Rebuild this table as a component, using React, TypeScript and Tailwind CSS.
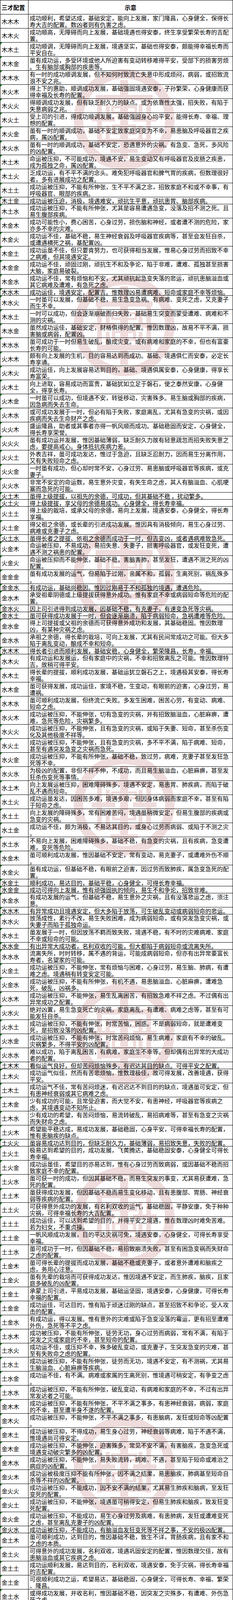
import React from "react";

// 三才配置表：每行的换行位置按原图写死
const rows: [string, string][] = [
  ["木木木", "成功顺利，希望达成，基础安定，能向上发展，家门隆昌，心身健全，保得长|寿大吉的配置。数凶者则有仇害之虑。"],
  ["木木火", "成功顺高，无障碍而向上发展，基础境遇也得安泰，终生享受繁荣长寿的吉配|置。"],
  ["木木土", "成功顺调，无障碍而向上发展，境遇坚实，基础也得安泰，颇能得幸福长寿而|平安自在。"],
  ["木木金", "虽有成功运，多受环境或他人所迫害有变动转移难得平安，受部下的损害劳烦|。生有脑部或胸部的疾患等。"],
  ["木木水", "有一时的成功顺调发展，但不知何时致流亡失意中形成烦闷，病弱，或招致流|浪不安之兆。"],
  ["木火木", "得上下的惠助，顺调成功发展，基础强固境遇安泰，子孙繁荣，心身健康而获|得幸福及长寿的配置。"],
  ["木火火", "得顺调成功发展，但有缺乏耐久力的缺点。或为依靠性太强，招失败，有陷于|失意病弱之兆。"],
  ["木火土", "受上司的引进，得成功顺调发展，基础强固身心均平安，能得长寿、幸福、理|想的配置。"],
  ["木火金", "虽有一时的顺调成功，基础不安定致家庭突变为不幸，易患脑及呼吸器官之疾|病，属凶配置。"],
  ["木火水", "虽有一时的顺调成功，基础不安定，恐遇意外的灾祸。有急变、急死，多风险|的凶配置。"],
  ["木土木", "命运被压抑，不可能成功，境遇不安，易生变动又有呼吸器官及皮肠之疾患，|成为孤独之命，属凶配置。"],
  ["木土火", "乏成功运，有不平不满的念头。难免犯呼吸器官和脾气胃的疾病，但数理很好|者，多有进展成功之配置。"],
  ["木土土", "成功运被压抑，不能有所伸张，生不平不满之念，招致家庭不和或不幸事，有|呼吸器官、眼部的疾病。"],
  ["木土金", "成功运被压迫，消极，境遇难安，顽抗生平意，顽抗患胃、脑部疾病。"],
  ["木土水", "成功运被压抑，不能有所伸张，尤其是容易遭遇急变，没落及招不测之死。且|易生腹部疾病。"],
  ["木金木", "成功可能性小，费心困苦，心身过劳，损伤脑和神经，或者遭不测的危险，家|亦多不幸的灾难。"],
  ["木金火", "成功运不佳，基础不稳，易生神经衰弱及呼吸器官疾病等，甚至会发狂自杀，|或遭遇横死之祸，基配置凶。"],
  ["木金土", "成功运虽不佳，但只要肯努力，也可获得相当发展，惟易心身过劳而招致不幸|之病难，但其境遇安定。"],
  ["木金金", "成功运不佳，顽固过刚，顽抗生不和及争论，陷于非难，遭难、孤独甚至损害|大脑，家庭易破裂。"],
  ["木金水", "成功运不佳，常有烦恼和不安，尤其顽抗起急变失落的悲运，顽抗患脑溢血或|其它病难及遭难，有急死之虑。"],
  ["木水木", "成功运佳，境遇安定，配置吉。惟数理凶易遭病难、短命或家庭不幸等烦恼。"],
  ["木水火", "一时虽可以发展，但基础不稳，易生急变急祸。有病难、变死之虑，又克妻子|而生不幸。"],
  ["木水土", "一时可以成功，但会逐渐崩破而归失败，基础易生突变而蒙受遭难、病难和不|测的灾祸。"],
  ["木水金", "虽然成功运佳，基础安定，财格俱得的配置。惟因数理凶，故易不平不满，损|害脑或病弱，配置凶。"],
  ["木水水", "虽可成功于一时但易生破乱，酿成灾变。或有病难和家庭的不幸，但也有富豪|长寿的可能。"],
  ["火木木", "颇有向上发展的生机，目的容易达到而成功。基础、境遇俱仁而安泰，必定长|寿享通。"],
  ["火木火", "成功运佳，向上发展容易达到目的，基础、境遇俱属安泰，心身健康，得享长|寿富荣。"],
  ["火木土", "向上进取，容易成功而富贵，基础犹如立足于磐石，使之泰然安康，心身健|全，得享长寿。"],
  ["火木金", "一时虽可以成功，但境遇不安，转徙移动，灾害殊多。易生脑或胸部的疾病，|因急病而失去生命。"],
  ["火木水", "或可成功发展于一时，但必有陷于失败，家庭离乱，尤其有急变的灾祸，或因|疾病而失去生命财产之虑。"],
  ["火火木", "盛运隆昌，助者或其事者亦得一帆风顺而成功。基础稳固而安定，心身健全，|得长寿享荣誉。"],
  ["火火火", "虽有成功运并发展，惟因基础薄弱，缺乏耐久力故有轻意疏忽而招失败失意之|虑，要提高戒心。身体抵抗疾病力差。"],
  ["火火土", "外表吉祥，虽可成功发达，惟过于急迫，且缺乏忍耐力，因而易生分离作用，|又有失败短命之虑。"],
  ["火火金", "一时虽有成功，但心却时常不安，心身过劳、易患脑或呼吸器官等疾病，或克|妻子。"],
  ["火火水", "非常不安定的命运数，易生意外灾变，有失生命之虑，其人有脑溢血、心肌哽|塞而急死的可能。"],
  ["火土木", "虽得上级提拔，以祖先的余德，可成功，但其基础不稳 ，扰动繁多。"],
  ["火土火", "得上级提拔，享父母的余德易成功。心身健全，得长寿幸福。"],
  ["火土土", "得上级的栽培，或承父母的余德，易向上发展，境遇安泰，心身健全，得长寿|享福。"],
  ["火土金", "得父祖之余德，或长辈的引进成功发展。惟因具有消极倾向，易生心身过劳、|病难或克妻子之虑。"],
  ["火土水", "虽得长者之提拔、依祖之余德而成功于一时，但吉变凶，或者遇病难致急死。"],
  ["火金木", "命运被压抑，不易成功，易招失意、失妻子，损害呼吸器官，或发狂变死，遭|遇不测之祸患的配置。"],
  ["火金火", "命运被压抑而不能伸张，基础不稳，害脑害肺，甚至发狂，遭遇不测之死的凶|配置。"],
  ["金金金", "虽有成功发展的运气，但易陷于过刚，亲属不和，孤弱，生离死别，祸乱殊多|。"],
  ["金金水", "有成功运，基础尚稳因。惟因过刚易于不和孤独的境遇，遭遇危险。"],
  ["金水木", "承受祖辈阴德或上级提拔获得意外成功。惟有家庭不幸或病弱短命等危险的配|置。"],
  ["金水火", "因上司引进得到成功发展，因基础不稳，有克妻子，有速变急死等灾祸。"],
  ["金水土", "虽可获得成功发展于一时，但会逐渐崩溃，陷于病弱短命，急祸遭难等危险。"],
  ["金水金", "得上司提拔或父祖的余德而可获得意外成功和发展，其基础稳固。惟因数理|凶，有某种灾祸之虑。"],
  ["金水水", "承祖之余德，得长辈的栽培，可向上发展，尤其有民间常成功之可能。但大多|陷于离乱变动，酿成不幸和短命。"],
  ["水木木", "得长者引进而顺利发展，基础安稳，心身健全，繁荣隆昌，长寿，幸福。"],
  ["水木火", "有成功运和发展运，但有家庭中的灾祸，不幸和招致离乱之可能。惟因数理特|吉，故稍可得平安。"],
  ["水木土", "得长辈的提拔，顺利成功发展，基础运犹立磐石之上，境遇极其安泰，得长寿|幸福。"],
  ["水木金", "虽可获得发展，成功运佳，家境不稳，生变动，有眼前的迫害，心身过劳，易|遭祸。"],
  ["水木水", "虽可顺利成功发展，但终流亡失败。多发生困难，困苦心劳，有变动、病难、|短命之虑。"],
  ["水火木", "成功运被压抑，不能伸张，切有急变的灾祸，并有招致脑溢血，心脏麻痹，遭|难，急死等危险，灾祸繁多。"],
  ["水火火", "成功运被压抑，不能伸张，且有急变的灾祸，或陷于失妻、短命，甚至杀伤变|化及其他极度不祥等。"],
  ["水火土", "成功运被压抑，不能伸张，且有急变的灾祸，多不平不满，陷于病难、短命，|甚至有遇突发急变之灾祸而急死。"],
  ["水火金", "成功运被压抑，不能有所伸张，基础不稳，致过劳，病难，克妻子甚至发狂急|死等不幸。"],
  ["水火水", "为极凶的配置，非但不祥不伸，不成功，而且易生脑溢血，心脏麻痹，甚至发|狂杀伤变死等事情。"],
  ["水土木", "向上发展运被压抑，困难障碍殊多，境遇不安定，易患胃、肺疾病，而陷于破|乱不遇而短命。"],
  ["水土火", "成功运虽发达，因困苦多难，境遇多艰，但因身体病弱而家庭不幸，甚至有陷|于短命之虑。"],
  ["水土土", "向上发展的障碍殊多，常有困难苦闷，境遇虽稍微安定，但易生腹部的疾病或|急变的灾祸。"],
  ["水土金", "成功运不佳，颇为消极，不易达其目的，或身心过劳而病弱、或陷于不测之灾|。"],
  ["水土水", "不易向上发展，困难障碍殊多，基础不稳，有急变的灾祸，且有疾病，急变遭|难，变死等危险。"],
  ["水金木", "虽可顺利成功发展，惟因基础不安定，常有变动，易克妻子，或遭难外伤不顺|。"],
  ["水金火", "虽有成功运，但基础不稳，有眼前之迫害，因过劳而致肺疾，属急变急死的配|置。"],
  ["水金土", "顺利成功，易达目的，基础平稳，心身健全，可得长寿幸福。"],
  ["水金金", "成功可得向上发展，惟有顽强固执的倾向，易生不和争论，招致非难。"],
  ["水金水", "有成功发展的运气，但基础不稳，易生意外之灾祸，且有没落悲运之虑，须注|意。"],
  ["水水木", "有异常成功且境遇安定，但大多陷于放荡，可生破乱变动或病弱短命的悲运。"],
  ["水水火", "放荡成性，素行不改，易生失败困难，成为病弱短命，或有突发急变灾祸，或|失妻子而陷于孤独命运。"],
  ["水水土", "虽发展于一时，但因放荡不羁而致失败，境遇不稳，有不时的灾难病难、家庭|不幸或短命的可能。"],
  ["水水金", "有出异常大成功者，名利双收的可能，但大都陷于病弱短命或流离失所。"],
  ["水水水", "流离失所，时时转移，属不遇的背运，可能成病弱短命，但亦有出异常豪富长|寿者，名望家的可能。"],
  ["火金土", "成功运被压抑，不能伸张，常有烦恼与困难，心身过劳，易生脑、肺病，有遭|难之虑。境遇稍有转变安定可能。"],
  ["火金水", "成功运被压抑，不能有所伸张，有机不遇，易患脑溢血、心脏麻痹，遭难急|死，破乱，凶祸多。"],
  ["火水木", "成功运被压抑，不能伸张，易生乱离困苦，有招致急难不祥之虑。不过偶有出|异常成功之配置。"],
  ["火水火", "绝对凶置，易生急变死亡的灾祸，家庭离乱，有遭难、病难之虑等，甚至有可|能发狂自杀。"],
  ["火水土", "成功运被压抑，不能有伸张，时常苦恼，困惑。不是病弱短命，就是遭难变|死，是招致没落的凶配置。"],
  ["火水金", "成功运被压抑，不能有伸张，时常苦闷烦恼，易生病难，家庭有不幸的破乱。|灾祸繁多，不得平安的凶配置。"],
  ["火水水", "难以成功，陷于离乱困苦，有病难，家庭生不幸等。但却偶有出异常的大成功|者的配置。"],
  ["土木木", "看似运气良好，但却苦闷烦恼殊多，有迟达其目的缺点。可得平安之配置。"],
  ["土木火", "成功运气似佳，然而有苦悲烦恼，惟数理极佳，故可得发展，改善境遇，获得|平安。"],
  ["土木土", "成功运气不佳，常有苦闷烦迷，有迟迟达不到目的的缺点，境遇虽可安定，但|有患神经衰弱或其它病难之虑。"],
  ["土木金", "少有成功的可能，且常受迫害，而大觉不安，有患神经，呼吸器官等疾病之|虑，其境遇变动不知所止。"],
  ["土木水", "少有成功的希望，有苦闷烦恼，易流转破乱，易招病难等，甚至有急变之灾祸|而失财命之虑。"],
  ["土火木", "希望能平稳达成，易成功发展，基础稳固，心身平安，可得幸福长寿的配置，|惟有患脑疾的缺点。"],
  ["土火火", "虽容易成功达到目的，但缺乏耐久力，基础薄弱，易招致失意，失败的配置。"],
  ["土火土", "极易达到希望的目的，成功发展，飞黄腾达，基础稳固安泰，心身健全可得长|寿幸福。"],
  ["土火金", "成功运虽佳，希望目的亦易达到，惟有心身过劳而致病弱，或因基础不稳而招|致家庭不幸的配置。"],
  ["土火水", "虽可获一时的成功，但因其基础不稳，而易生突发的事变，尤其易获遭难，急|死的配置。"],
  ["土土木", "虽获得成功发展，但因基础不稳而易生变化移动，且有患腹部、胃肠、神经衰|弱等疾病的配置。"],
  ["土土火", "可获得意外成功的发展，有名利双收的运气，基础稳固，平静安康，免于种种|灾祸，可得幸福长寿的大吉配置。"],
  ["土土土", "成功运佳，可以达到希望的目的，并得平安之境遇，惟在数理凶时难免苦难。|若为妇女，不重贞操。"],
  ["土土金", "一帆风顺成功发展，目的平达灾祸可免，境遇安泰，心身健全，可得长寿享受|幸福。"],
  ["土土水", "虽可成功于一时，但因基础不稳，易招致崩溃失败，甚至有困急变祸而失财命|之虑的配置。"],
  ["土金木", "虽可得长辈的提拔而成功发展，基础不稳或克妻子，或者意外遭难和脑疾之|虑，务用心注意。"],
  ["土金火", "虽有先辈的栽培而可获得成功发达，惟因境遇不安定，而生肺疾，脑疾，且家|庭多破乱的凶配置。"],
  ["土金土", "承蒙上司引进，平易成功发展，基础运坚固，境遇安泰，心身健康，可得长寿|幸福的配置。"],
  ["土金金", "成功运佳，可达目的，惟有陷于顽迷过刚的缺点，甚至招致不和争论，受人攻|击的配置。"],
  ["土金水", "有成功运，得以发展。惟有意外的灾难或陷于急变没落的霉运，更有招至遭难|外伤，急死等不平之虑。"],
  ["土水木", "成功被压抑，不能有所伸张，徒劳无功，身心过劳而病弱，常有不满，有陷于|突发之灾或家庭的不幸，甚至短命的配置。"],
  ["土水火", "成功运不佳，或压抑不幸，殊多破乱变动，或克妻子，生突发急变的灾难，甚|至有失败命之虑的配置。"],
  ["土水土", "成功运被压抑，不能有所伸张，徒劳而无功，境遇不安定，有不测祸，尤其易|生脑溢血、心脏麻痹等疾病。"],
  ["土水金", "成功运不佳，有不满。病难或家属的生离死别，惟境遇可稍安定，有争变之虑|。"],
  ["土水水", "成功运被压抑，不能有所伸张，破乱变动，有病难和家庭的不幸，不过有出异|常发达者之可能。"],
  ["金木木", "成功运被压抑，不能有所伸张，不平不满之事多，有患神经衰弱，病弱，家庭|的不幸，甚至遭半身不遂的配置。"],
  ["金木火", "成功运被压抑，不能伸张，不平不满之事多，有患脑病，发狂或短命等凶配置|。"],
  ["金木土", "成功运被压抑，不得成功，易生身心过劳，神经衰弱等病难，陷于不遇不满，|惟境遇尚可得安定。"],
  ["金木金", "成功运被压抑，不能伸张，迫害殊多，常见不安不满，有害脑疾，急变急死或|境遇变动破灾繁多的凶配置。"],
  ["金木水", "成功运被压抑，不能伸张，易失败流转，病难、不遇，甚至陷于短命或难治之|病症的凶配置。"],
  ["金火木", "成功运被极度压抑不能有所伸张，因不满之结果，易患脑疾，肺病基至短命自|杀等不祥的凶配置。"],
  ["金火火", "成功运被压抑，不能成功，因不安不满的结果，尤其易生肺疾和脑病，至发狂|变死的配置。"],
  ["金火土", "成功运被压抑，不能伸张，境遇虽可稍得安定，但易生肺疾和脑疾，致发狂变|死配置。"],
  ["金火金", "成功运被压抑，不能成功，易生心身过劳及病难，有患肺病，发狂或遭难变死|之虑，甚至离乱克妻子的凶配置。"],
  ["金火水", "成功运被压抑，不能成功，有脑溢血发狂变死等不祥之事，不安的极凶配置。"],
  ["金土木", "虽可顺利成功，达到目的，惟因基础不稳，致生不详，胃肠疾病，且有家不和|之虑的本质。"],
  ["金土火", "可得意外的成功发展，名利双收，境遇巩固安定的配置，惟因数理欠佳，故有|患脑溢血或其它疾病之虑。"],
  ["金土土", "成功运顺利发展，易达到目的，名利双收，境遇安泰，免于灾祸，得长寿幸福|的吉配置。"],
  ["金土金", "可很顺利成功之运，希望易达，基础稳固，心身健全，可得长寿、幸福、繁荣|、隆昌。"],
  ["金土水", "或得成功发展，并收名利，惟因基础不稳，因突发之灾殊多，有遭难、外伤急|死之虑。"],
  ["金金木", "虽得成功发展，但易于生灾，争论不和，有失妻子，获不测的危险，务必小心|注意。"],
  ["金金火", "虽有陈功发展的运气，但因心身过刚而易生脑溢血，肺病。境遇不安定，离乱|灾祸，变动殊多。"],
  ["金金土", "容易成功而达到目的，境遇安固，心身健全。惟易陷于过刚，如不谨慎，即会|遭遇意外之难。"],
];

// 水印圆章的纵向位置（左上角）
const stampTops = [175, 703, 1340, 1930, 2515, 2985, 3625];

function Stamp({ top }: { top: number }) {
  return (
    <svg
      className="absolute left-[187px] pointer-events-none"
      style={{ top }}
      width="262"
      height="262"
      viewBox="0 0 262 262"
    >
      <g fill="#efdcdc" stroke="none">
        <path
          fillRule="evenodd"
          d="M131 2a129 129 0 1 0 0.01 0zM131 26a105 105 0 1 1-0.01 0z"
        />
        {/* 中轴 */}
        <rect x="121" y="30" width="20" height="202" />
        {/* 横笔 */}
        <rect x="58" y="68" width="146" height="14" />
        <rect x="70" y="180" width="122" height="14" />
        <rect x="48" y="124" width="60" height="12" />
        <rect x="154" y="124" width="60" height="12" />
        {/* 左侧 */}
        <rect x="62" y="82" width="12" height="44" />
        <rect x="84" y="92" width="10" height="34" />
        <rect x="62" y="136" width="12" height="60" />
        <rect x="84" y="146" width="10" height="34" />
        {/* 右侧 */}
        <rect x="188" y="82" width="12" height="44" />
        <rect x="168" y="92" width="10" height="34" />
        <rect x="188" y="136" width="12" height="60" />
        <rect x="168" y="146" width="10" height="34" />
        {/* 中间方框 */}
        <path fillRule="evenodd" d="M98 96h66v20h-66zM104 102h54v8h-54z" />
        <path fillRule="evenodd" d="M100 144h62v26h-62zM108 150h46v14h-46z" />
        <rect x="96" y="206" width="70" height="10" />
      </g>
    </svg>
  );
}

export default function App() {
  return (
    <div className="relative w-[597px] bg-white text-black font-['Noto_Sans_CJK_SC','Noto_Sans',sans-serif]">
      {stampTops.map((t) => (
        <Stamp key={t} top={t} />
      ))}

      <div className="relative border-b border-black">
        {/* 表头 */}
        <div className="flex h-[36px] border-t border-black">
          <div className="w-[73px] shrink-0 border-l border-r border-black flex items-center pl-[3px] text-[15px] font-bold leading-[18px]">
            三才配置
          </div>
          <div className="flex-1 border-r border-black flex items-center justify-center text-[15px] font-bold leading-[18px]">
            示意
          </div>
        </div>

        {rows.map(([name, text], i) => {
          const lines = text.split("|");
          const tall = lines.length > 1;
          return (
            <div
              key={name + i}
              className={`flex border-t border-black ${tall ? "h-[36px]" : "h-[18px]"}`}
            >
              <div className="relative w-[73px] shrink-0 border-l border-r border-black flex items-center pl-[3px] text-[15px] leading-[17px]">
                {i > 1 && (
                  <span className="absolute left-0 top-0 w-0 h-0 border-t-[5px] border-t-[#1a8a1a] border-r-[5px] border-r-transparent" />
                )}
                {name}
              </div>
              <div className="flex-1 border-r border-black pl-[3px] text-[15px] leading-[17px]">
                {lines.map((l, j) => (
                  <div key={j} className="whitespace-pre">
                    {l}
                  </div>
                ))}
              </div>
            </div>
          );
        })}
      </div>
    </div>
  );
}
